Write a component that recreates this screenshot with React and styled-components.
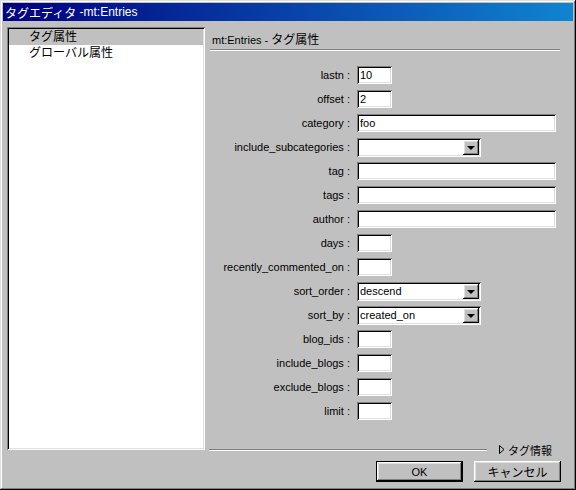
import React from "react";
import styled, { createGlobalStyle } from "styled-components";

const GlobalStyle = createGlobalStyle`
  html, body {
    margin: 0;
    padding: 0;
    background: #c0c0c0;
  }
  body {
    font-family: "Liberation Sans", "Noto Sans CJK JP", sans-serif;
    font-size: 11px;
    color: #000;
  }
`;

const sunken = `
  box-shadow: inset 1px 1px #808080, inset -1px -1px #fff,
    inset 2px 2px #000, inset -2px -2px #dfdfdf;
`;

const raised = `
  box-shadow: inset -1px -1px #000, inset 1px 1px #fff,
    inset -2px -2px #808080, inset 2px 2px #dfdfdf;
`;

const fields = [
  { name: "lastn", kind: "input", size: "small", value: "10" },
  { name: "offset", kind: "input", size: "small", value: "2" },
  { name: "category", kind: "input", size: "wide", value: "foo" },
  { name: "include_subcategories", kind: "select", value: "" },
  { name: "tag", kind: "input", size: "wide", value: "" },
  { name: "tags", kind: "input", size: "wide", value: "" },
  { name: "author", kind: "input", size: "wide", value: "" },
  { name: "days", kind: "input", size: "small", value: "" },
  { name: "recently_commented_on", kind: "input", size: "small", value: "" },
  { name: "sort_order", kind: "select", value: "descend" },
  { name: "sort_by", kind: "select", value: "created_on" },
  { name: "blog_ids", kind: "input", size: "small", value: "" },
  { name: "include_blogs", kind: "input", size: "small", value: "" },
  { name: "exclude_blogs", kind: "input", size: "small", value: "" },
  { name: "limit", kind: "input", size: "small", value: "" },
];

const App = () => {
  return (
    <>
      <GlobalStyle />
      <Window>
        <TitleBar>
          <Jp>タグエディタ</Jp>&nbsp;-mt:Entries
        </TitleBar>
        <Body>
          <List>
            <ListItem selected>
              <Jp>タグ属性</Jp>
            </ListItem>
            <ListItem>
              <Jp>グローバル属性</Jp>
            </ListItem>
          </List>
          <Main>
            <Header>
              mt:Entries - <Jp>タグ属性</Jp>
            </Header>
            <Rule />
            <Form>
              {fields.map((f) => (
                <React.Fragment key={f.name}>
                  <Label>{f.name} :</Label>
                  {f.kind === "select" ? (
                    <Select>
                      <SelectText>{f.value}</SelectText>
                      <ArrowButton>
                        <Arrow />
                      </ArrowButton>
                    </Select>
                  ) : (
                    <TextField size={f.size} defaultValue={f.value} readOnly />
                  )}
                </React.Fragment>
              ))}
            </Form>
            <Footer>
              <FooterRule />
              <Expander>
                <svg width="6" height="9" viewBox="0 0 6 9">
                  <polygon points="0.5,0.5 5,4.5 0.5,8.5" fill="none" stroke="#000" strokeWidth="1" />
                </svg>
                <ExpanderText>タグ情報</ExpanderText>
              </Expander>
            </Footer>
            <ButtonRow>
              <Button primary>OK</Button>
              <Button>
                <Jp>キャンセル</Jp>
              </Button>
            </ButtonRow>
          </Main>
        </Body>
      </Window>
    </>
  );
};

const Window = styled.div`
  width: 576px;
  height: 490px;
  box-sizing: border-box;
  padding: 3px;
  background: #c0c0c0;
  box-shadow: inset -1px -1px #000, inset 1px 1px #dfdfdf,
    inset -2px -2px #808080, inset 2px 2px #fff;
  display: flex;
  flex-direction: column;
`;

const TitleBar = styled.div`
  height: 18px;
  flex-shrink: 0;
  background: linear-gradient(to right, #000080, #1084d0);
  color: #fff;
  font-size: 12px;
  padding-left: 2px;
  display: flex;
  align-items: center;
  white-space: nowrap;
`;

const Jp = styled.span`
  font-size: 12px;
`;

const Body = styled.div`
  flex: 1;
  display: flex;
  gap: 4px;
  padding: 6px 0 5px 4px;
  min-height: 0;
`;

const List = styled.div`
  width: 198px;
  height: 423px;
  flex-shrink: 0;
  box-sizing: border-box;
  padding: 2px;
  background: #fff;
  ${sunken}
`;

const ListItem = styled.div`
  height: 16px;
  line-height: 16px;
  padding-left: 20px;
  background: ${(p) => (p.selected ? "#c0c0c0" : "transparent")};
  white-space: nowrap;
`;

const Main = styled.div`
  width: 352px;
  display: flex;
  flex-direction: column;
`;

const Header = styled.div`
  height: 22px;
  box-sizing: border-box;
  padding: 6px 0 0 3px;
  line-height: 14px;
  white-space: nowrap;
`;

const Rule = styled.div`
  margin: 0 1px;
  border-top: 1px solid #808080;
  border-bottom: 1px solid #fff;
`;

const Form = styled.div`
  margin-top: 15px;
  display: grid;
  grid-template-columns: 141px 1fr;
  grid-auto-rows: 18px;
  column-gap: 7px;
  row-gap: 6px;
`;

const Label = styled.div`
  text-align: right;
  line-height: 18px;
  white-space: nowrap;
`;

const TextField = styled.input`
  width: ${(p) => (p.size === "wide" ? "199px" : "35px")};
  height: 18px;
  box-sizing: border-box;
  border: none;
  outline: none;
  margin: 0;
  padding: 0 3px;
  background: #fff;
  font: inherit;
  font-size: 11px;
  color: #000;
  ${sunken}
`;

const Select = styled.div`
  width: 124px;
  height: 19px;
  box-sizing: border-box;
  padding: 2px;
  background: #fff;
  display: flex;
  align-items: stretch;
  ${sunken}
`;

const SelectText = styled.div`
  flex: 1;
  padding-left: 1px;
  line-height: 15px;
  white-space: nowrap;
`;

const ArrowButton = styled.div`
  width: 16px;
  background: #c0c0c0;
  display: flex;
  align-items: center;
  justify-content: center;
  ${raised}
`;

const Arrow = styled.div`
  width: 0;
  height: 0;
  border-left: 4px solid transparent;
  border-right: 4px solid transparent;
  border-top: 4px solid #000;
  margin-top: 1px;
`;

const Footer = styled.div`
  margin-top: auto;
  height: 15px;
  display: flex;
  align-items: center;
`;

const FooterRule = styled.div`
  flex: 1;
  margin-right: 12px;
  border-top: 1px solid #808080;
  border-bottom: 1px solid #fff;
`;

const Expander = styled.div`
  display: flex;
  align-items: center;
  gap: 3px;
  padding-right: 9px;
`;

const ExpanderText = styled.span`
  font-size: 11px;
  white-space: nowrap;
`;

const ButtonRow = styled.div`
  margin-top: 4px;
  display: flex;
  justify-content: flex-end;
  gap: 11px;
`;

const Button = styled.button`
  width: 87px;
  height: 21px;
  box-sizing: border-box;
  margin: 0;
  padding: 0;
  background: #c0c0c0;
  font: inherit;
  color: #000;
  border: ${(p) => (p.primary ? "1px solid #000" : "none")};
  ${raised}
`;

export default App;
